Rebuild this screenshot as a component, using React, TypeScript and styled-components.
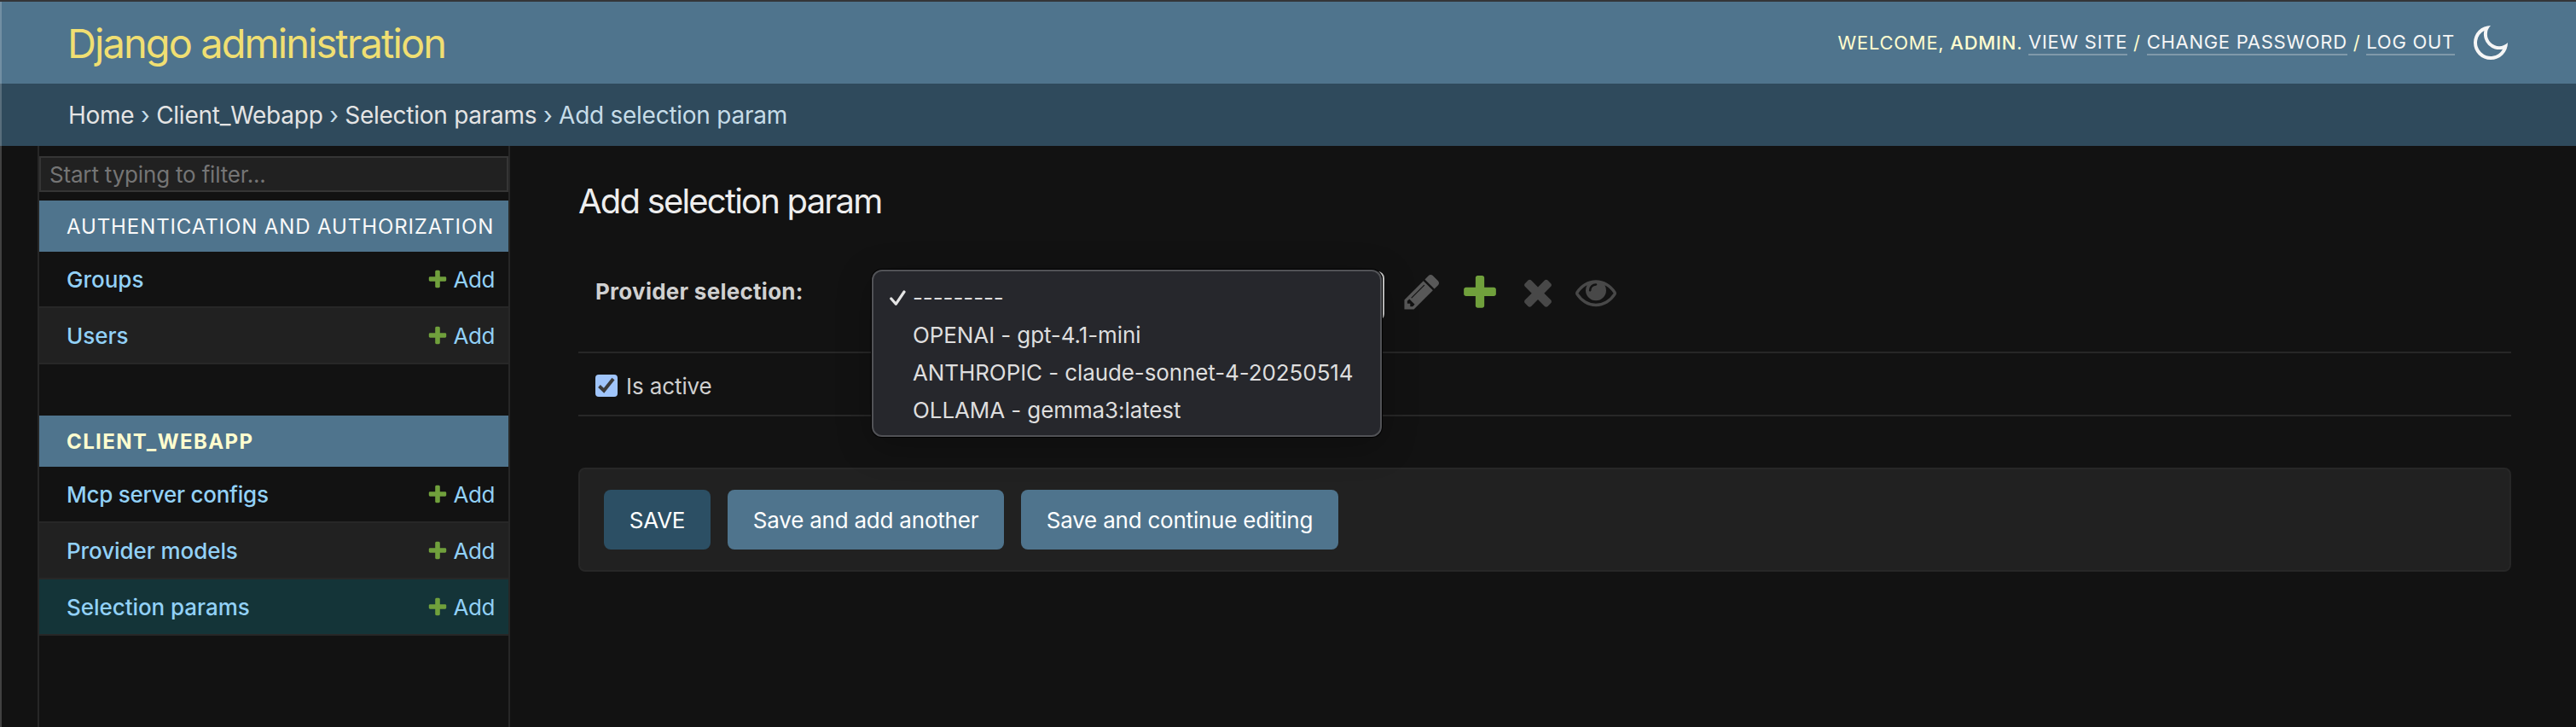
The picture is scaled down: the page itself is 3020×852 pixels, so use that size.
import React from 'react';
import styled, { createGlobalStyle, css } from 'styled-components';

const Global = createGlobalStyle`
  *, *::before, *::after { box-sizing: border-box; }
  html, body { margin: 0; background: #121212; }
  body { font-family: Inter, "Liberation Sans", sans-serif; font-size: 28px; color: #d0d0d0; overflow: hidden; }
`;

const Page = styled.div`
  height: 852px;
  display: flex;
  flex-direction: column;
  border-top: 2px solid #343538;
  position: relative;
`;
const WindowEdge = styled.div`
  position: absolute;
  left: 0;
  top: 0;
  bottom: 0;
  width: 2px;
  background: rgba(255, 255, 255, 0.2);
`;
const Header = styled.header`
  height: 96px;
  flex: none;
  background: #4f748d;
  padding: 0 80px 0 79px;
  display: flex;
  align-items: center;
  justify-content: space-between;
`;
const Brand = styled.h1`
  margin: 0;
  padding-top: 2px;
  font-size: 47px;
  font-weight: 400;
  line-height: 94px;
  letter-spacing: -1.93px;
  color: #f0df72;
`;
const UserTools = styled.div`
  display: flex;
  align-items: center;
  color: #fffdcf;
  font-size: 22px;
  letter-spacing: 0.72px;
  white-space: pre;
`;
const ToolLink = styled.a`
  color: #f6f6f6;
  line-height: 28px;
  border-bottom: 2px solid #8099aa;
`;
const Strong = styled.strong`font-weight: 500;`;
const MoonIcon = styled.svg`
  width: 40px;
  height: 40px;
  margin-left: 22px;
  display: block;
`;
const Breadcrumbs = styled.nav`
  height: 73px;
  flex: none;
  background: #2f4a5c;
  padding: 0 80px;
  line-height: 74px;
  letter-spacing: -0.26px;
  white-space: pre;
  color: #c6dce8;
`;
const Crumb = styled.a`color: #e4e4e4;`;
const Main = styled.div`
  flex: 1;
  display: flex;
  min-height: 0;
`;
const Sidebar = styled.nav`
  width: 554px;
  margin-left: 44px;
  flex: none;
  border-left: 2px solid #272727;
  border-right: 2px solid #272727;
  padding-top: 12px;
`;
const Filter = styled.input`
  display: block;
  width: 100%;
  height: 42px;
  margin: 0 0 10px;
  padding: 1px 10px 0;
  border: 2px solid #353535;
  background: #212121;
  font: inherit;
  font-size: 26px;
  letter-spacing: -0.18px;
  outline: none;
  &::placeholder { color: #757575; opacity: 1; }
`;
const Module = styled.section`margin-bottom: 60px;`;
const Caption = styled.h2<{ $current?: boolean }>`
  margin: 0;
  height: 60px;
  line-height: 61px;
  padding-left: 32px;
  background: #4f748d;
  color: ${p => (p.$current ? '#fffdcf' : '#f9f9f9')};
  font-size: 24px;
  font-weight: ${p => (p.$current ? 700 : 400)};
  letter-spacing: ${p => (p.$current ? 1.38 : 0.89)}px;
  white-space: nowrap;
`;
const ModelRow = styled.div<{ $shade?: 'alt' | 'selected' }>`
  height: 66px;
  display: flex;
  align-items: center;
  justify-content: space-between;
  padding: 0 16px 0 32px;
  border-bottom: 2px solid #272727;
  color: #92d1f7;
  font-size: 26px;
  ${p => p.$shade === 'alt' && css`background: #212121;`}
  ${p => p.$shade === 'selected' && css`background: #143438;`}
`;
const ModelName = styled.span<{ $tracking: number }>`
  font-weight: 500;
  letter-spacing: ${p => p.$tracking}px;
`;
const AddLink = styled.a`
  display: flex;
  align-items: center;
  gap: 5px;
  letter-spacing: -0.4px;
`;
const Content = styled.main`
  flex: 1;
  padding: 42px 76px 0 80px;
`;
const Title = styled.h2`
  margin: 0 0 52px;
  height: 48px;
  line-height: 46px;
  font-size: 40px;
  font-weight: 400;
  letter-spacing: -1.8px;
  color: #eeeeee;
`;
const FormRow = styled.div<{ $height: number; $top: number }>`
  height: ${p => p.$height}px;
  display: flex;
  align-items: flex-start;
  padding: ${p => p.$top}px 20px 0;
  border-bottom: 2px solid #272727;
`;
const FieldLabel = styled.label`
  width: 324px;
  height: 48px;
  line-height: 48px;
  font-size: 26px;
  font-weight: 700;
  letter-spacing: 0.26px;
`;
const SelectWrap = styled.div`
  width: 601px;
  height: 58px;
  position: relative;
`;
const SelectBox = styled.div`
  height: 58px;
  border: 2px solid #c8c8c8;
  border-radius: 8px;
`;
const Menu = styled.ul`
  position: absolute;
  z-index: 2;
  top: -2px;
  left: 0;
  width: 598px;
  height: 196px;
  margin: 0;
  padding: 9px 0 0;
  list-style: none;
  background: #26272c;
  border: 2px solid #515256;
  border-radius: 12px;
  box-shadow: 0 0 0 1px #000, 0 10px 40px rgba(0, 0, 0, 0.25);
`;
const Option = styled.li`
  height: 44px;
  line-height: 44px;
  display: flex;
  align-items: center;
  font-size: 26px;
  letter-spacing: -0.1px;
  color: #dedede;
  white-space: nowrap;
`;
const CheckSlot = styled.span`
  width: 46px;
  padding-left: 18px;
  flex: none;
  display: flex;
`;
const Related = styled.div`
  height: 48px;
  margin-left: 20px;
  display: flex;
  align-items: center;
  gap: 20px;
`;
const Glyph = styled.svg<{ $size: number }>`
  width: ${p => p.$size}px;
  height: ${p => p.$size}px;
  flex: none;
  display: block;
`;
const CheckLabel = styled.label`
  display: flex;
  align-items: center;
  gap: 10px;
  height: 32px;
  font-size: 26px;
  letter-spacing: -0.1px;
`;
const CheckBox = styled.span`
  width: 26px;
  height: 26px;
  border-radius: 4px;
  background: #a0c5fb;
  display: flex;
`;
const SubmitRow = styled.div`
  height: 122px;
  margin-top: 60px;
  padding: 0 28px;
  display: flex;
  align-items: center;
  gap: 20px;
  background: #212121;
  border: 2px solid #272727;
  border-radius: 8px;
`;
const Button = styled.button<{ $primary?: boolean; $width: number }>`
  width: ${p => p.$width}px;
  height: 70px;
  padding: 1px 0 0;
  border: 0;
  border-radius: 8px;
  background: ${p => (p.$primary ? '#2c4f64' : '#4f748d')};
  color: #fff;
  font: inherit;
  font-size: 26px;
  letter-spacing: -0.22px;
  white-space: nowrap;
`;

const glyphs = {
  plus: 'M1600 796v192q0 40-28 68t-68 28h-416v416q0 40-28 68t-68 28h-192q-40 0-68-28t-28-68v-416h-416q-40 0-68-28t-28-68v-192q0-40 28-68t68-28h416v-416q0-40 28-68t68-28h192q40 0 68 28t28 68v416h416q40 0 68 28t28 68z',
  pencil: 'M491 1536l91-91-235-235-91 91v107h128v128h107zm523-928q0-22-22-22-10 0-17 7l-542 542q-7 7-7 17 0 22 22 22 10 0 17-7l542-542q7-7 7-17zm-54-192l416 416-832 832h-416v-416zm683 96q0 53-37 90l-166 166-416-416 166-165q36-38 90-38 53 0 91 38l235 234q37 39 37 91z',
  cross: 'M1490 1322q0 40-28 68l-136 136q-28 28-68 28t-68-28l-294-294-294 294q-28 28-68 28t-68-28l-136-136q-28-28-28-68t28-68l294-294-294-294q-28-28-28-68t28-68l136-136q28-28 68-28t68 28l294 294 294-294q28-28 68-28t68 28l136 136q28 28 28 68t-28 68l-294 294 294 294q28 28 28 68z',
  eye: 'M1664 960q-152-236-381-353 61 104 61 225 0 185-131.5 316.5t-316.5 131.5-316.5-131.5-131.5-316.5q0-121 61-225-229 117-381 353 133 205 333.5 326.5t434.5 121.5 434.5-121.5 333.5-326.5zm-720-384q0-20-14-34t-34-14q-125 0-214.5 89.5t-89.5 214.5q0 20 14 34t34 14 34-14 14-34q0-86 61-147t147-61q20 0 34-14t14-34zm848 384q0 34-20 69-140 230-376.5 368.5t-499.5 138.5-499.5-139-376.5-368q-20-35-20-69t20-69q140-229 376.5-368t499.5-139 499.5 139 376.5 368q20 35 20 69z',
};

const Icon = ({ name, size, color }: { name: keyof typeof glyphs; size: number; color: string }) => (
  <Glyph $size={size} viewBox="0 0 1792 1792" fill={color}>
    <path d={glyphs[name]} />
  </Glyph>
);

const apps = [
  {
    name: 'AUTHENTICATION AND AUTHORIZATION',
    current: false,
    models: [{ label: 'Groups', tracking: 0 }, { label: 'Users', tracking: 0 }],
  },
  {
    name: 'CLIENT_WEBAPP',
    current: true,
    models: [
      { label: 'Mcp server configs', tracking: -0.25 },
      { label: 'Provider models', tracking: -0.08 },
      { label: 'Selection params', tracking: -0.05 },
    ],
  },
];
const options = ['---------', 'OPENAI - gpt-4.1-mini', 'ANTHROPIC - claude-sonnet-4-20250514', 'OLLAMA - gemma3:latest'];
const shades = [undefined, 'alt', 'selected'] as const;

export default function App() {
  return (
    <Page>
      <Global />
      <Header>
        <Brand>Django administration</Brand>
        <UserTools>
          <span>WELCOME, <Strong>ADMIN</Strong>. </span>
          <ToolLink>VIEW SITE</ToolLink> / <ToolLink>CHANGE PASSWORD</ToolLink> / <ToolLink>LOG OUT</ToolLink>
          <MoonIcon viewBox="0 0 40 40" fill="#f6f6f6" fillRule="evenodd">
            <path d="M20 0 A20 20 0 1 0 40 20 A14.14 14.14 0 0 1 20 0 Z M12.36 5.94 A18.1 18.1 0 0 0 34.06 27.64 A16 16 0 1 1 12.36 5.94 Z" />
          </MoonIcon>
        </UserTools>
      </Header>
      <Breadcrumbs>
        <Crumb>Home</Crumb> › <Crumb>Client_Webapp</Crumb> › <Crumb>Selection params</Crumb> › Add selection param
      </Breadcrumbs>
      <Main>
        <Sidebar>
          <Filter placeholder="Start typing to filter..." />
          {apps.map(app => (
            <Module key={app.name}>
              <Caption $current={app.current}>{app.name}</Caption>
              {app.models.map((m, i) => (
                <ModelRow key={m.label} $shade={shades[i]}>
                  <ModelName $tracking={m.tracking}>{m.label}</ModelName>
                  <AddLink><Icon name="plus" size={26} color="#70a03c" />Add</AddLink>
                </ModelRow>
              ))}
            </Module>
          ))}
        </Sidebar>
        <Content>
          <Title>Add selection param</Title>
          <FormRow $height={101} $top={5}>
            <FieldLabel>Provider selection:</FieldLabel>
            <SelectWrap>
              <SelectBox />
              <Menu>
                {options.map((o, i) => (
                  <Option key={o}>
                    <CheckSlot>
                      {i === 0 && (
                        <svg width="20" height="20" viewBox="0 0 20 20" fill="none" stroke="#e4e4e4" strokeWidth="3.2" strokeLinecap="round" strokeLinejoin="round">
                          <path d="M2.8 11 L8.3 17.3 L18 3" />
                        </svg>
                      )}
                    </CheckSlot>
                    {o}
                  </Option>
                ))}
              </Menu>
            </SelectWrap>
            <Related>
              <Icon name="pencil" size={48} color="#585858" />
              <Icon name="plus" size={48} color="#70a03c" />
              <Icon name="cross" size={48} color="#484848" />
              <Icon name="eye" size={48} color="#484848" />
            </Related>
          </FormRow>
          <FormRow $height={74} $top={22}>
            <CheckLabel>
              <CheckBox>
                <svg width="26" height="26" viewBox="0 0 26 26" fill="none" stroke="#3b3b3b" strokeWidth="4">
                  <path d="M4.5 13.5 L10 18.7 L21 5" />
                </svg>
              </CheckBox>
              Is active
            </CheckLabel>
          </FormRow>
          <SubmitRow>
            <Button $primary $width={125}>SAVE</Button>
            <Button $width={324}>Save and add another</Button>
            <Button $width={372}>Save and continue editing</Button>
          </SubmitRow>
        </Content>
      </Main>
      <WindowEdge />
    </Page>
  );
}
